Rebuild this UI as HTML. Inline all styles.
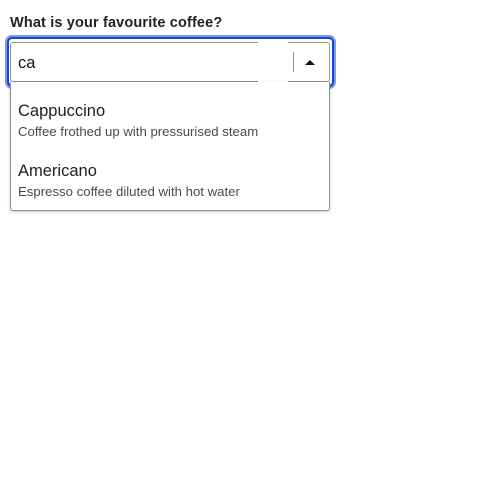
<!DOCTYPE html>
<html><head><style>
html,body{margin:0;padding:0;background:#fff;width:500px;height:500px;overflow:hidden}
body{font-family:"Liberation Sans","Noto Sans CJK JP",sans-serif;color:#1d1d1d;position:relative}
.lbl{position:absolute;left:10px;top:15px;font-size:14.5px;font-weight:bold;color:#222;letter-spacing:0.15px}
.ring{position:absolute;left:5px;top:35px;width:331px;height:54px;box-sizing:border-box;border-radius:7px;background:#7c9be6}
.ring2{position:absolute;left:7px;top:37px;width:327px;height:50px;box-sizing:border-box;border:2px solid #1446d8;border-radius:5px;background:#fff}
.inp{position:absolute;left:10px;top:42px;width:248px;height:40px;box-sizing:border-box;border:1px solid #8c9099;border-right:none;border-radius:3px 0 0 3px}
.btn{position:absolute;left:288px;top:42px;width:42px;height:40px;box-sizing:border-box;border:1px solid #8c9099;border-left:none;border-radius:0 3px 3px 0}
.sep{position:absolute;left:293px;top:52px;width:1px;height:20px;background:#8c9099}
.tri{position:absolute;left:305px;top:60px;width:0;height:0;border-left:5px solid transparent;border-right:5px solid transparent;border-bottom:5px solid #111}
.val{position:absolute;left:18px;top:54px;font-size:16.5px;color:#111}
.dd{position:absolute;left:10px;top:82px;width:320px;height:129px;box-sizing:border-box;border:1px solid #8c9099;border-top:none;border-radius:0 0 3px 3px;background:#fff;box-shadow:0 1px 3px rgba(0,0,0,.2)}
.t{position:absolute;left:18px;font-size:16.5px;color:#1d1d1d}
.d{position:absolute;left:18px;font-size:13.2px;color:#4a4a4a}
</style></head><body>
<div class="lbl">What is your favourite coffee?</div>
<div class="ring"></div><div class="ring2"></div>
<div class="inp"></div><div class="btn"></div><div class="sep"></div><div class="tri"></div>
<div class="val">ca</div>
<div class="dd"></div>
<div class="t" style="top:102px">Cappuccino</div>
<div class="d" style="top:124px">Coffee frothed up with pressurised steam</div>
<div class="t" style="top:162px">Americano</div>
<div class="d" style="top:184px">Espresso coffee diluted with hot water</div>
</body></html>
